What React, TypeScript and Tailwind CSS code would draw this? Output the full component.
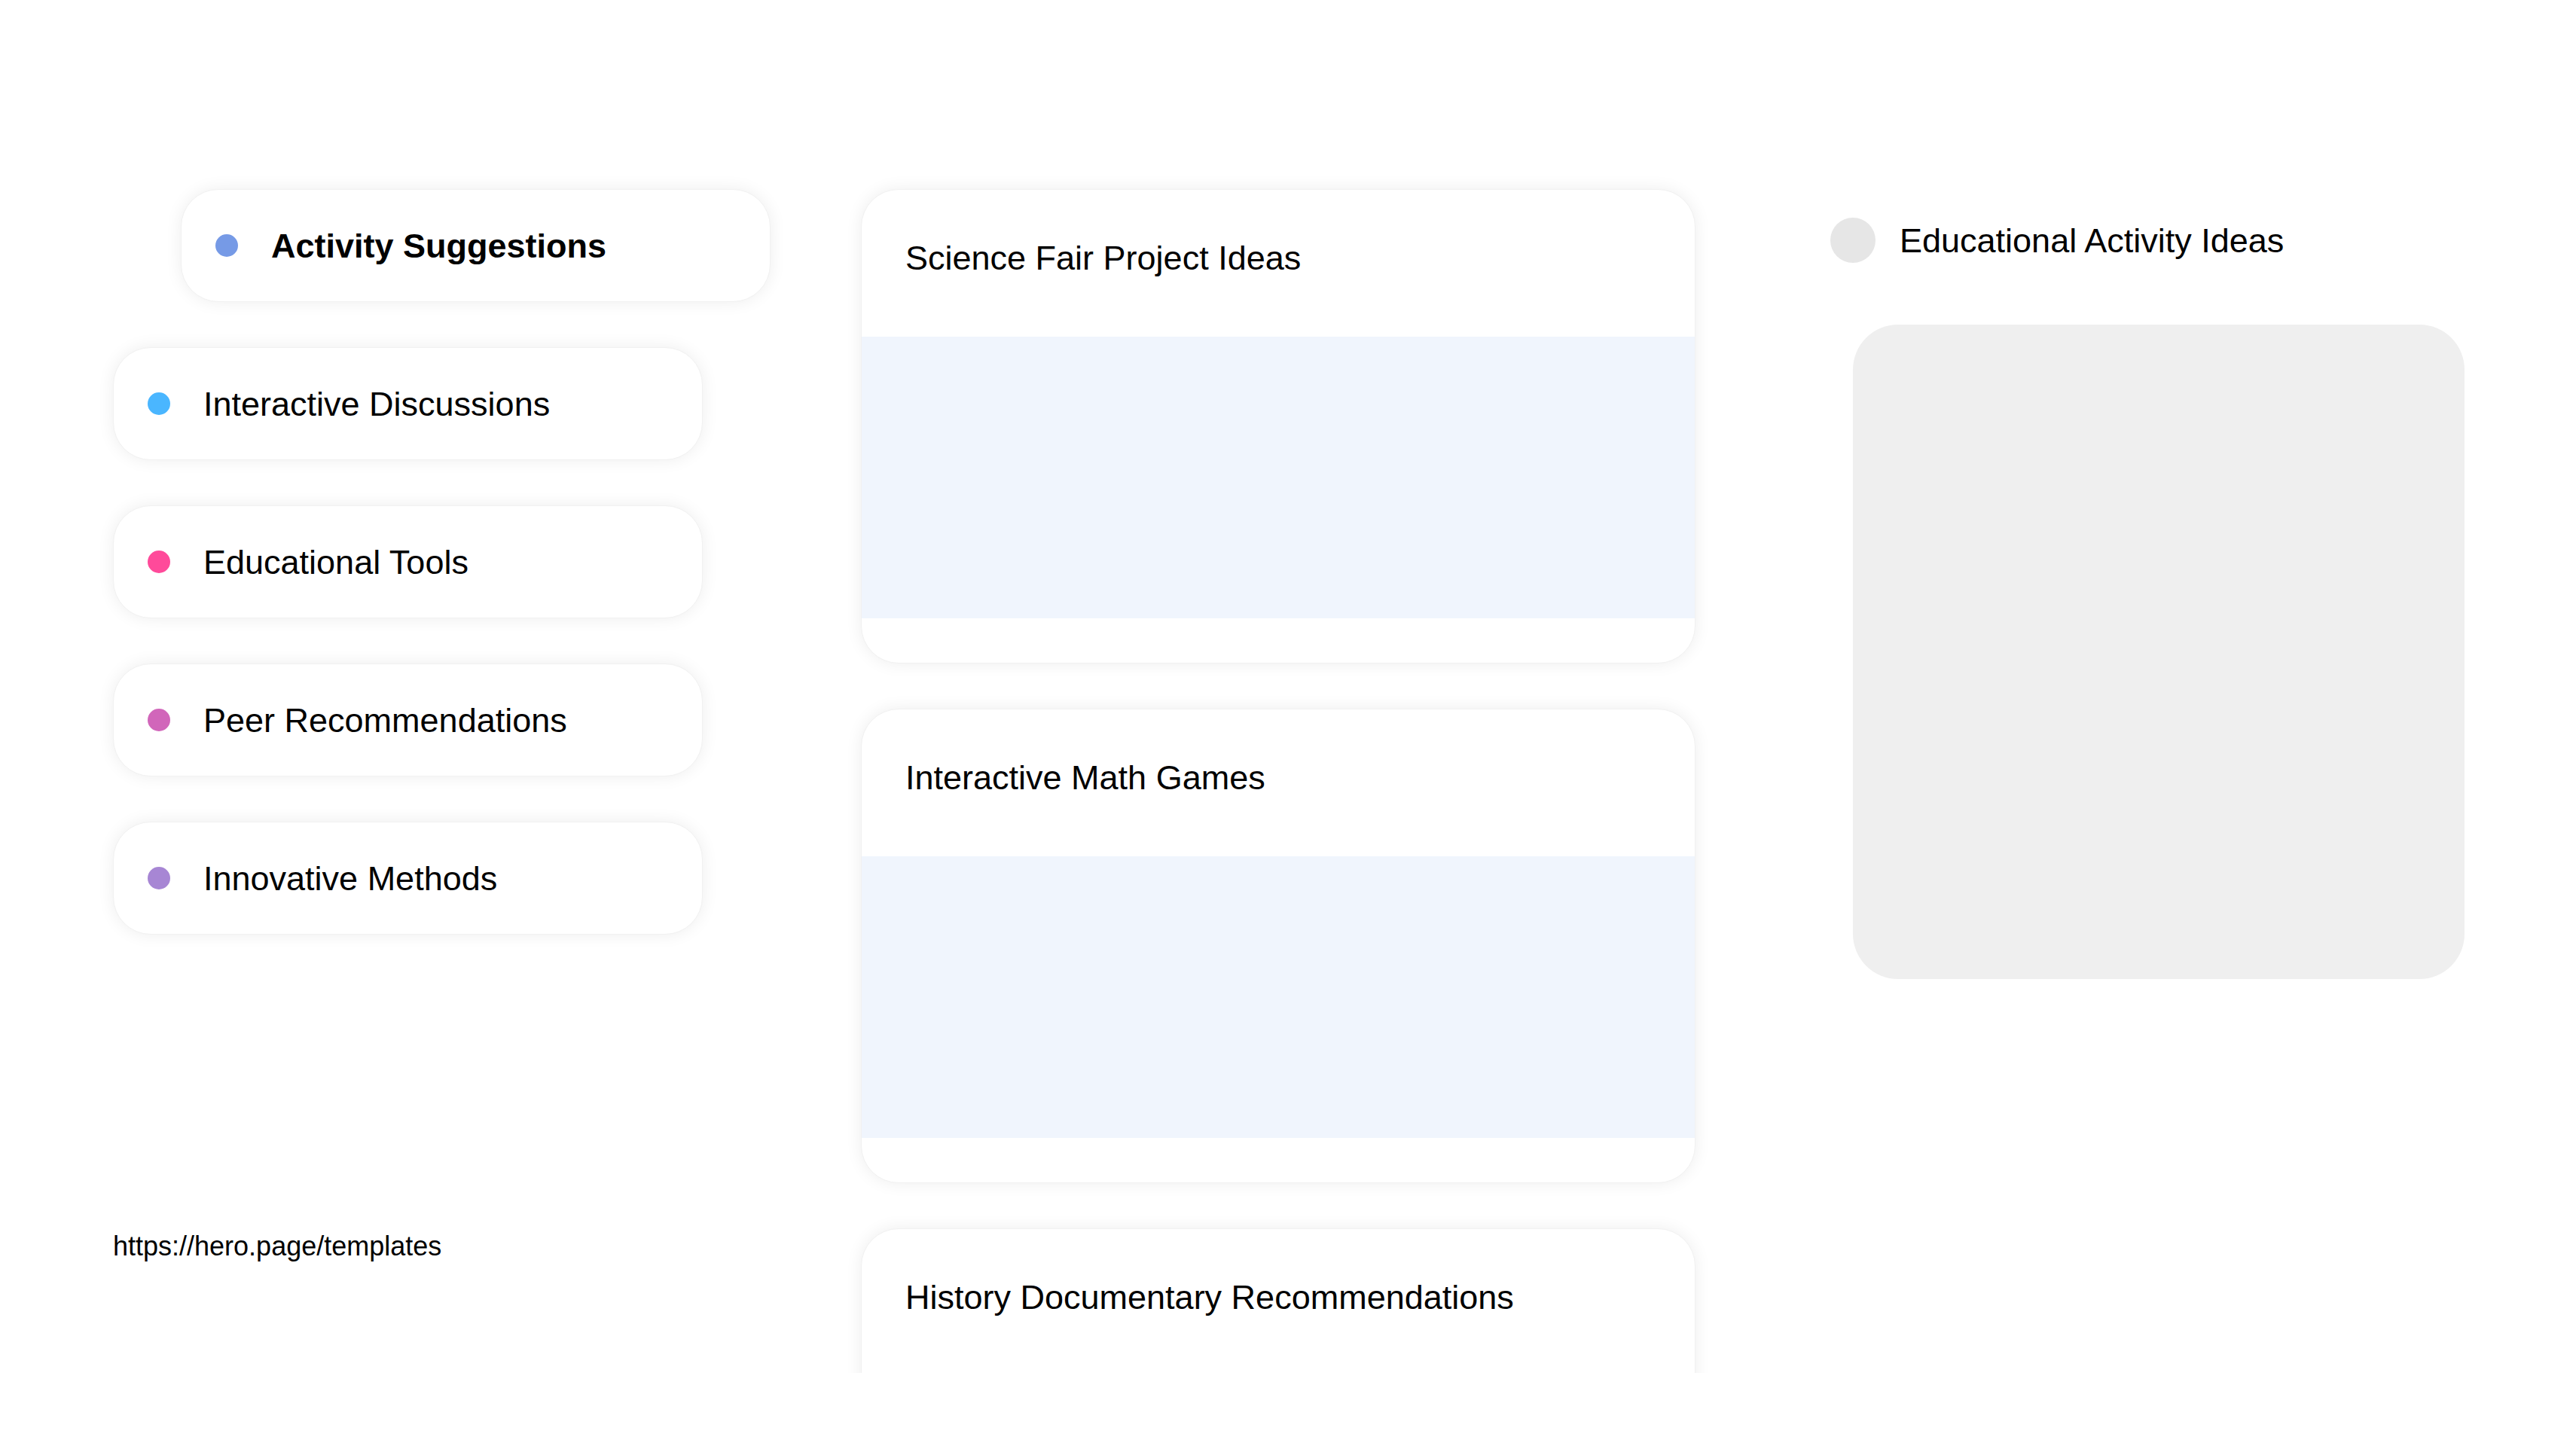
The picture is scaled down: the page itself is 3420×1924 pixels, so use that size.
import React from "react";

interface Topic {
  title: string;
  dot: string;
}

const topics: Topic[] = [
  { title: "Interactive Discussions", dot: "bg-[#4ab6ff]" },
  { title: "Educational Tools", dot: "bg-[#ff4a9a]" },
  { title: "Peer Recommendations", dot: "bg-[#d166ba]" },
  { title: "Innovative Methods", dot: "bg-[#a786d4]" },
];

const ideas: string[] = [
  "Science Fair Project Ideas",
  "Interactive Math Games",
  "History Documentary Recommendations",
];

const cardShadow =
  "bg-white border border-[#f1f1f1] shadow-[0_0_22px_rgba(0,0,0,0.07)]";

const App = () => {
  return (
    <div className="w-[3420px] h-[1924px] bg-white overflow-hidden font-['Liberation_Sans',Arial,sans-serif] text-black">
      <div className="flex items-start pl-[150px]">
        {/* левая колонка */}
        <div className="flex flex-col w-[873px] pt-[251px]">
          <div
            className={`ml-[90px] w-[783px] h-[150px] rounded-[50px] flex items-center px-[45px] ${cardShadow}`}
          >
            <span className="w-[30px] h-[30px] rounded-full bg-[#769ae6] shrink-0" />
            <span className="ml-[44px] text-[45px] font-bold leading-none">
              Activity Suggestions
            </span>
          </div>

          <div className="flex flex-col gap-[60px] mt-[60px]">
            {topics.map((item) => (
              <div
                key={item.title}
                className={`w-[783px] h-[150px] rounded-[50px] flex items-center px-[45px] ${cardShadow}`}
              >
                <span
                  className={`w-[30px] h-[30px] rounded-full shrink-0 ${item.dot}`}
                />
                <span className="ml-[44px] text-[45px] leading-none">
                  {item.title}
                </span>
              </div>
            ))}
          </div>

          <div className="mt-[393px] text-[36px] leading-[42px]">
            https://hero.page/templates
          </div>
        </div>

        {/* средняя колонка */}
        <div className="ml-[96px] h-[1823px] overflow-hidden px-[24px] pt-[251px]">
          <div className="flex flex-col gap-[60px] w-[1108px]">
            {ideas.map((title) => (
              <div
                key={title}
                className={`h-[630px] rounded-[50px] overflow-hidden flex flex-col ${cardShadow}`}
              >
                <div className="h-[195px] shrink-0 pl-[58px] pt-[68px] text-[45px] leading-none">
                  {title}
                </div>
                <div className="h-[374px] shrink-0 bg-[#f0f5fd]" />
              </div>
            ))}
          </div>
        </div>

        {/* правая колонка */}
        <div className="ml-[155px] pt-[289px] flex flex-col">
          <div className="flex items-center h-[60px]">
            <span className="w-[60px] h-[60px] rounded-full bg-[#e6e6e6] shrink-0" />
            <span className="ml-[32px] text-[45px] leading-none">
              Educational Activity Ideas
            </span>
          </div>
          <div className="ml-[30px] mt-[82px] w-[812px] h-[869px] rounded-[60px] bg-[#efefef]" />
        </div>
      </div>
    </div>
  );
};

export default App;
